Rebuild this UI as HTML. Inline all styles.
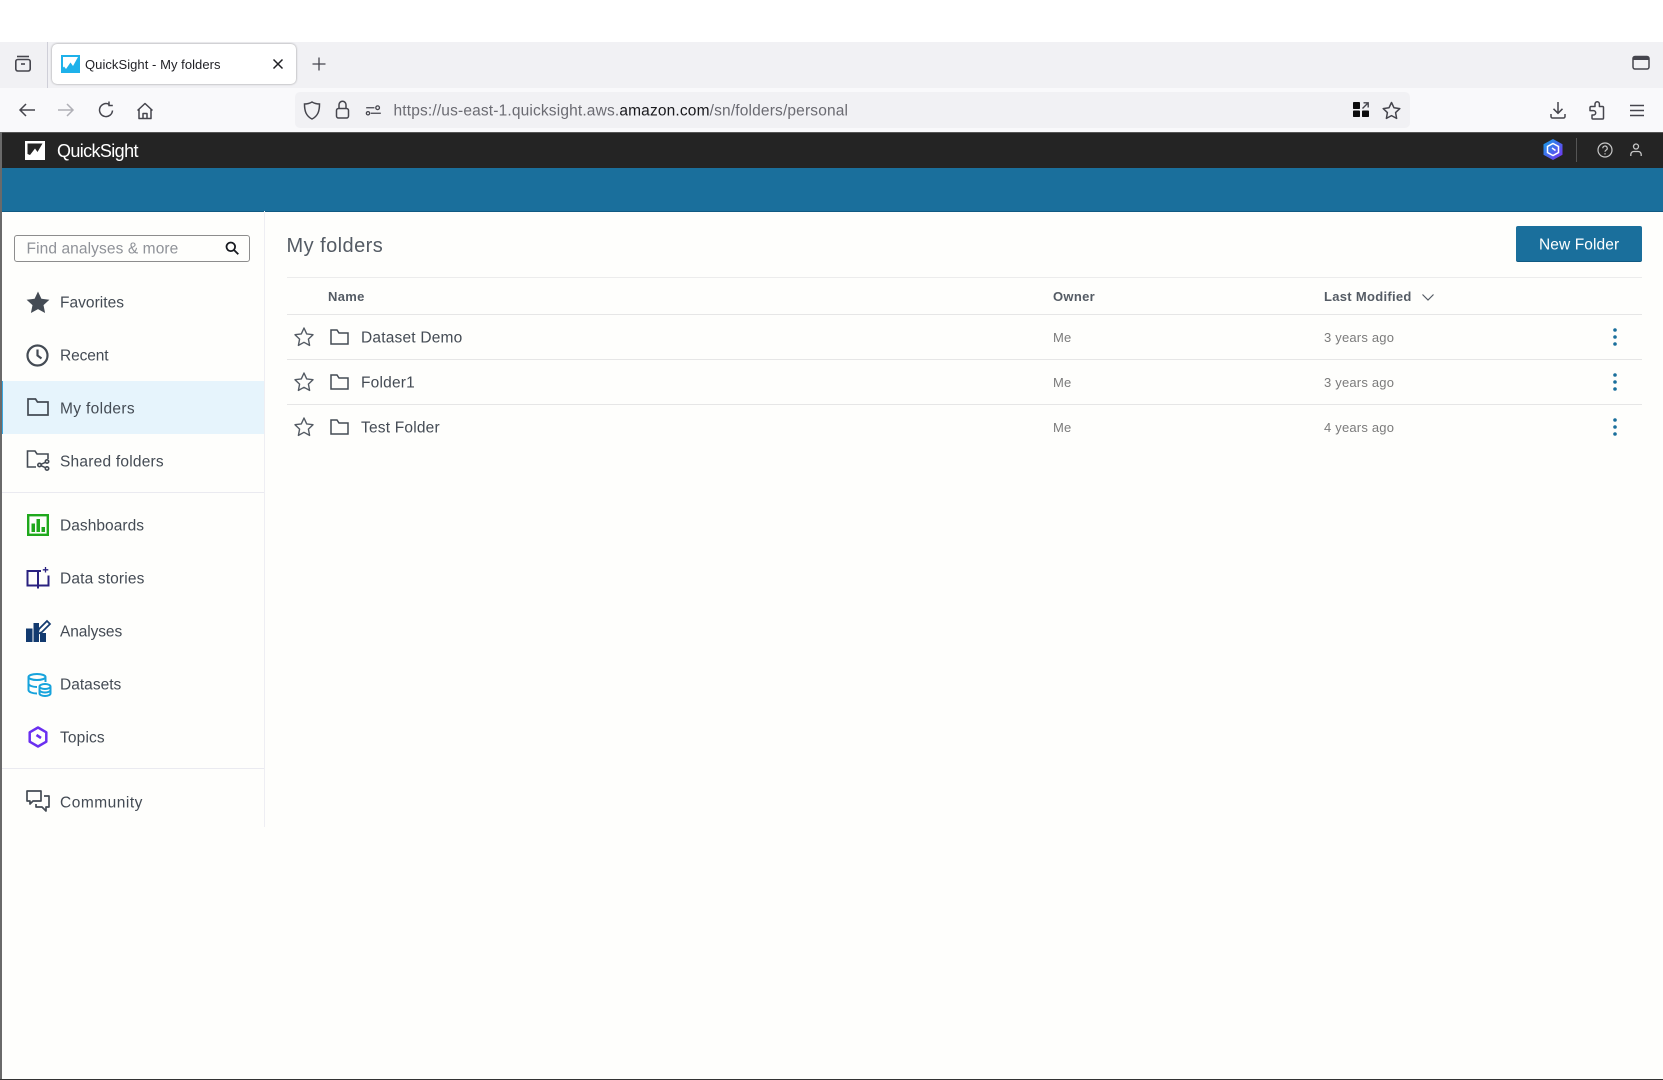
<!DOCTYPE html>
<html lang="en">
<head>
<meta charset="utf-8">
<title>QuickSight - My folders</title>
<style>
html,body{margin:0;padding:0;background:#fff}
body{width:1663px;height:1080px;position:relative;overflow:hidden;font-family:"Liberation Sans",Arial,sans-serif;color:#444b54;filter:blur(.35px)}
.b{position:absolute}
.t{position:absolute;white-space:nowrap;transform:translateY(-50%);line-height:1.2}
svg{position:absolute;overflow:visible;fill:none}
.nav{font-size:15.5px;color:#444b54;left:60px;letter-spacing:.15px}
.row{font-size:15.5px;color:#444b54;left:361px;letter-spacing:.2px}
.sm{font-size:13px;color:#7b7b7b;letter-spacing:.2px}
.th{font-size:13px;font-weight:700;color:#545b64;letter-spacing:.3px}
.line{position:absolute;left:286.5px;width:1355.5px;height:1px;background:#e6e6e6}
</style>
</head>
<body>
<!-- browser chrome -->
<div class="b" style="left:0;top:42px;width:1663px;height:46px;background:#f1f1f4"></div>
<div class="b" style="left:0;top:88px;width:1663px;height:44px;background:#f9f9fb"></div>
<div class="b" style="left:47px;top:42px;width:1px;height:46px;background:#cfcfd8"></div>
<svg style="left:12.5px;top:54px" width="20" height="20" viewBox="0 0 20 20" stroke="#45454d" stroke-width="1.6"><path d="M4 2.5h12"/><rect x="2.8" y="5.5" width="14.4" height="11.5" rx="2"/><path d="M8 10h4"/></svg>
<div class="b" style="left:52px;top:43.5px;width:243.5px;height:40.5px;background:#fff;border-radius:5px;box-shadow:0 0 2px rgba(0,0,0,.4)"></div>
<svg style="left:60.5px;top:55px" width="19" height="18" viewBox="0 0 19 18"><rect width="19" height="18" fill="#1eb1ea"/><path d="M2 2h15l-5 9-2.500-3.500L5 14l-2-2.500-1 1z" fill="#fff"/></svg>
<div class="t" style="left:85px;top:65px;font-size:13px;color:#1f1f24;letter-spacing:.05px">QuickSight - My folders</div>
<svg style="left:271.500px;top:58px" width="12" height="12" viewBox="0 0 12 12" stroke="#1f1f24" stroke-width="1.500"><path d="M1.500 1.500l9 9M10.500 1.500l-9 9"/></svg>
<svg style="left:312px;top:57px" width="14" height="14" viewBox="0 0 14 14" stroke="#45454d" stroke-width="1.300"><path d="M7 .5v13M.5 7h13"/></svg>
<svg style="left:1632px;top:55px" width="18" height="16" viewBox="0 0 18 16" stroke="#45454d" stroke-width="1.500"><rect x="1" y="1.500" width="16" height="12.500" rx="2"/><path d="M1 3.500h16" stroke-width="3"/></svg>

<svg style="left:18px;top:102px" width="18" height="16" viewBox="0 0 18 16" stroke="#45454d" stroke-width="1.500"><path d="M17 8H2M8 2L2 8l6 6"/></svg>
<svg style="left:57px;top:102px" width="18" height="16" viewBox="0 0 18 16" stroke="#b0b0b6" stroke-width="1.500"><path d="M1 8h15M10 2l6 6-6 6"/></svg>
<svg style="left:97px;top:100.500px" width="18" height="18" viewBox="0 0 18 18" stroke="#45454d" stroke-width="1.500"><path d="M15.500 9.500A6.500 6.500 0 1 1 12 3.300"/><path d="M12 .5v4h3.800" /></svg>
<svg style="left:136px;top:101.500px" width="18" height="18" viewBox="0 0 18 18" stroke="#45454d" stroke-width="1.500" stroke-linejoin="round"><path d="M1.500 8.500L9 1.500l7.500 7M3 7v9.500h12V7M7 16.500v-5h4v5"/></svg>

<div class="b" style="left:295px;top:92px;width:1114.500px;height:35.500px;background:#f1f1f4;border-radius:5px"></div>
<svg style="left:303px;top:101px" width="18" height="19" viewBox="0 0 18 19" stroke="#45454d" stroke-width="1.500"><path d="M9 1C6.500 2.500 4 3 1.500 3c0 7 1.500 12 7.500 15 6-3 7.500-8 7.500-15C14 3 11.500 2.500 9 1z"/></svg>
<svg style="left:335px;top:100px" width="15" height="19" viewBox="0 0 15 19" stroke="#45454d" stroke-width="1.500"><rect x="1.500" y="8.500" width="12" height="9.500" rx="2"/><path d="M4 8.500V4.800a3.500 3.500 0 0 1 7 0v3.700"/></svg>
<svg style="left:366px;top:105px" width="15" height="11" viewBox="0 0 16 12" stroke="#45454d" stroke-width="1.400"><path d="M0 3h9M5 9h11"/><circle cx="12.500" cy="3" r="2"/><circle cx="2" cy="9" r="1.800"/></svg>
<div class="t" style="left:393.500px;top:111.500px;font-size:15.500px;color:#6b6b72;letter-spacing:.16px">https://us-east-1.quicksight.aws.<span style="color:#18181c">amazon.com</span>/sn/folders/personal</div>
<svg style="left:1353px;top:102px" width="16" height="15" viewBox="0 0 16 15"><rect x="0" y="0" width="7" height="7" rx=".8" fill="#0c0c0d"/><rect x="0" y="8.500" width="7" height="6.500" rx=".8" fill="#0c0c0d"/><rect x="9" y="8.500" width="7" height="6.500" rx=".8" fill="#0c0c0d"/><path d="M9.500 6.500L15 1M10.500 .8H15.200V5.500" stroke="#45454d" stroke-width="1.400"/></svg>
<svg style="left:1382px;top:100.500px" width="19" height="19" viewBox="0 0 19 19" stroke="#45454d" stroke-width="1.500" stroke-linejoin="round"><path d="M9.500 1.500l2.500 5.300 5.800.8-4.200 4 1 5.800-5.100-2.800-5.100 2.800 1-5.800-4.200-4 5.800-.8z"/></svg>
<svg style="left:1549.500px;top:101.500px" width="16" height="17" viewBox="0 0 16 17" stroke="#45454d" stroke-width="1.500"><path d="M8 0v11M3.500 6.800L8 11.300l4.500-4.500M1 12v2.500a1.500 1.500 0 0 0 1.500 1.500h11a1.500 1.500 0 0 0 1.500-1.500V12"/></svg>
<svg style="left:1589px;top:100.500px" width="16" height="19" viewBox="0 0 16 19" stroke="#45454d" stroke-width="1.500" stroke-linejoin="round"><path d="M6 5.500V3a2.200 2.200 0 0 1 4.400 0v2.500h3.100a1 1 0 0 1 1 1V17a1 1 0 0 1-1 1H4a1 1 0 0 1-1-1v-3h1.500a2.200 2.200 0 0 0 0-4.400H1V6.500a1 1 0 0 1 1-1z"/></svg>
<svg style="left:1630px;top:103.500px" width="14" height="13" viewBox="0 0 14 13" stroke="#45454d" stroke-width="1.500"><path d="M0 1.500h14M0 6.500h14M0 11.500h14"/></svg>

<!-- app header -->
<div class="b" style="left:0;top:132px;width:1663px;height:35.500px;background:#242424;border-top:1px solid #555;box-sizing:border-box"></div>
<div class="b" style="left:0;top:167.500px;width:1663px;height:44px;background:#1a6f9c;border-bottom:1px solid #105a82;box-sizing:border-box"></div>
<svg style="left:24.500px;top:141px" width="20" height="19" viewBox="0 0 20 19"><rect width="20" height="19" fill="#fff"/><path d="M2.500 2.500h15L12.500 11 10 7.500 5 14l-2.500-1z" fill="#242424"/></svg>
<div class="t" style="left:57px;top:151.500px;font-size:18px;color:#fff;letter-spacing:-.62px">QuickSight</div>
<svg style="left:1543px;top:139px" width="20" height="21" viewBox="0 0 20 21"><defs><linearGradient id="g" x1="0" y1="0" x2="1" y2="1"><stop offset="0" stop-color="#12a3e8"/><stop offset="1" stop-color="#7a2df0"/></linearGradient></defs><path d="M10 0l9.500 5.200v10.600L10 21 .5 15.800V5.200z" fill="url(#g)"/><path d="M10 4.500l5.500 3v6L10 16.500l-5.500-3v-6z" stroke="#fff" stroke-width="1.500"/><path d="M9 9l3.500 2.500" stroke="#fff" stroke-width="1.500"/></svg>
<div class="b" style="left:1576px;top:138px;width:1px;height:24px;background:#555"></div>
<svg style="left:1597px;top:142px" width="16" height="16" viewBox="0 0 16 16" stroke="#c8c8c8" stroke-width="1.200"><circle cx="8" cy="8" r="7"/><path d="M5.800 6.200a2.200 2.200 0 1 1 3.300 1.900c-.8.500-1.100.9-1.100 1.700"/><path d="M8 11.200v1.300"/></svg>
<svg style="left:1630px;top:143px" width="12" height="14" viewBox="0 0 12 14" stroke="#c8c8c8" stroke-width="1.300"><circle cx="6" cy="3.500" r="2.500"/><path d="M.8 13v-1.500a3 3 0 0 1 3-3h4.400a3 3 0 0 1 3 3V13"/></svg>

<!-- page -->
<div class="b" style="left:0;top:211.500px;width:1663px;height:868.500px;background:#fefefc"></div>
<div class="b" style="left:0;top:132px;width:1.500px;height:948px;background:#6a6a6a"></div>
<div class="b" style="left:0;top:1079px;width:1663px;height:1px;background:#333"></div>
<div class="b" style="left:264px;top:211px;width:1px;height:616px;background:#eeeef3"></div>

<!-- search -->
<div class="b" style="left:14px;top:234.500px;width:236px;height:27.500px;border:1px solid #8d8d8d;border-radius:3px;box-sizing:border-box"></div>
<div class="t" style="left:26.500px;top:249.500px;font-size:15.500px;color:#8f9298;letter-spacing:.1px">Find analyses &amp; more</div>
<svg style="left:225px;top:241px" width="14" height="14" viewBox="0 0 14 14" stroke="#16191f" stroke-width="1.800"><circle cx="5.800" cy="5.800" r="4.300"/><path d="M9 9l4.300 4.300"/></svg>

<!-- sidebar -->
<div class="b" style="left:2px;top:381px;width:262px;height:53px;background:#e6f4fc;border-left:1.500px solid #3aa7e0;box-sizing:border-box"></div>
<div class="b" style="left:2px;top:492px;width:262px;height:1px;background:#eaeaf0"></div>
<div class="b" style="left:2px;top:768px;width:262px;height:1px;background:#eaeaf0"></div>

<svg style="left:26px;top:291px" width="24" height="22" viewBox="0 0 24 22"><path d="M12 .5l3.400 7.300 8 .9-5.900 5.400 1.600 7.900L12 18.100l-7.100 3.900 1.600-7.900L.6 8.700l8-.9z" fill="#444b54"/></svg>
<div class="t nav" style="top:304px;letter-spacing:.03px">Favorites</div>
<svg style="left:26px;top:343.500px" width="23" height="23" viewBox="0 0 23 23" stroke="#444b54" stroke-width="2.200"><circle cx="11.500" cy="11.500" r="10"/><path d="M11.500 5.500v6l4 3"/></svg>
<div class="t nav" style="top:357px;letter-spacing:-.1px">Recent</div>
<svg style="left:27px;top:398px" width="22" height="18" viewBox="0 0 22 18" stroke="#444b54" stroke-width="1.700"><path d="M1 1h7.500l2 3H21v13H1z"/></svg>
<div class="t nav" style="top:410px;letter-spacing:.35px">My folders</div>
<svg style="left:26px;top:450px" width="24" height="21" viewBox="0 0 24 21" stroke="#444b54" stroke-width="1.600"><path d="M10 17H1.500V1h7.500l2 3h11v5"/><circle cx="21" cy="11.500" r="1.700"/><circle cx="13.500" cy="15" r="1.700"/><circle cx="21" cy="18.500" r="1.700"/><path d="M15 14.300l4.500-2M15 15.700l4.500 2"/></svg>
<div class="t nav" style="top:462.500px;letter-spacing:.22px">Shared folders</div>

<svg style="left:27px;top:514px" width="22" height="22" viewBox="0 0 22 22"><rect x="1.200" y="1.200" width="19.600" height="19.600" stroke="#1fa81c" stroke-width="2.400"/><path d="M4.500 9.500h3.500V18H4.500zM9.500 5h3.500v13H9.500zM14.500 13h3.500v5h-3.500z" fill="#1fa81c"/></svg>
<div class="t nav" style="top:527px;letter-spacing:.05px">Dashboards</div>
<svg style="left:26px;top:567px" width="24" height="22" viewBox="0 0 24 22" stroke="#29217f" stroke-width="2"><path d="M1.500 4h10.500v14.500H1.500zM15 4h-3M22.500 8.500v10H12M12 18.500v3"/><path d="M19.500 0v5.500M16.800 2.800h5.500" stroke-width="1.300"/></svg>
<div class="t nav" style="top:580px">Data stories</div>
<svg style="left:26px;top:620px" width="24" height="22" viewBox="0 0 24 22"><path d="M0 8.500h6.500V22H0zM7.500 3h5.500v19H7.500zM14 13h6v9h-6z" fill="#123a6f"/><path d="M11.500 14l1.500-5L21 1l3 3-8 8z" fill="#fefefc" stroke="#123a6f" stroke-width="1.700"/></svg>
<div class="t nav" style="top:633px;letter-spacing:-.1px">Analyses</div>
<svg style="left:26.500px;top:672.500px" width="24" height="24" viewBox="0 0 24 24" stroke="#16a3dc" stroke-width="2"><ellipse cx="10" cy="4" rx="8.500" ry="3"/><path d="M1.500 4v13c0 2 4 3.500 8.500 3.500M18.500 4v5M1.500 10.500c0 2 4 3.500 8.500 3.500"/><ellipse cx="18" cy="13.500" rx="5.500" ry="2.500" fill="#fefefc"/><path d="M12.500 13.500v7c0 1.400 2.500 2.500 5.500 2.500s5.500-1.100 5.500-2.500v-7M12.500 17c0 1.400 2.500 2.500 5.500 2.500s5.500-1.100 5.500-2.500"/></svg>
<div class="t nav" style="top:686px;letter-spacing:.02px">Datasets</div>
<svg style="left:28px;top:726px" width="20" height="22" viewBox="0 0 20 22" stroke="#6a2ff0" stroke-width="2.500" stroke-linejoin="round"><path d="M10 1.500l8.300 4.800v9.400L10 20.500l-8.300-4.800V6.300z"/><path d="M8.500 9l4.500 3" stroke-width="2.600"/></svg>
<div class="t nav" style="top:739px">Topics</div>
<svg style="left:26px;top:790px" width="24" height="23" viewBox="0 0 24 23" stroke="#444b54" stroke-width="1.700" stroke-linejoin="round"><path d="M1 1h14v10H7l-3 3v-3H1z"/><path d="M18 6h5v11h-3v4l-4-4h-6v-3"/></svg>
<div class="t nav" style="top:803.500px;letter-spacing:.5px">Community</div>

<!-- main -->
<div class="t" style="left:286.500px;top:246px;font-size:20px;color:#545b64;letter-spacing:.45px">My folders</div>
<div class="b" style="left:1516px;top:226px;width:126px;height:36px;background:#1a6f9c;border-radius:2px;border-bottom:1px solid #105a82;box-sizing:border-box"></div>
<div class="t" style="left:1539px;top:246px;font-size:15.500px;color:#fff;letter-spacing:.1px">New Folder</div>

<div class="line" style="top:276.500px;height:1.500px;background:#ececec"></div>
<div class="line" style="top:314px"></div>
<div class="line" style="top:359px"></div>
<div class="line" style="top:404px"></div>

<div class="t th" style="left:328px;top:297px">Name</div>
<div class="t th" style="left:1053px;top:297px">Owner</div>
<div class="t th" style="left:1324px;top:297px">Last Modified</div>
<svg style="left:1422px;top:293.500px" width="12" height="7" viewBox="0 0 12 7" stroke="#545b64" stroke-width="1.200"><path d="M.5.500L6 6l5.500-5.500"/></svg>

<!-- rows -->
<svg style="left:294px;top:327px" width="20" height="19" viewBox="0 0 20 19" stroke="#545b64" stroke-width="1.400" stroke-linejoin="round"><path d="M10 1l2.700 5.900 6.300.8-4.600 4.400 1.200 6.300L10 15.300l-5.600 3.100 1.200-6.300L1 7.700l6.300-.8z"/></svg>
<svg style="left:330px;top:329px" width="19" height="16" viewBox="0 0 19 16" stroke="#444b54" stroke-width="1.500"><path d="M1 1h6l2 3h9v11H1z"/></svg>
<div class="t row" style="top:338.500px">Dataset Demo</div>
<div class="t sm" style="left:1053px;top:337.500px">Me</div>
<div class="t sm" style="left:1324px;top:337.500px">3 years ago</div>
<svg style="left:1612px;top:328px" width="6" height="18" viewBox="0 0 6 18"><circle cx="3" cy="2" r="1.800" fill="#1a6f9c"/><circle cx="3" cy="9" r="1.800" fill="#1a6f9c"/><circle cx="3" cy="16" r="1.800" fill="#1a6f9c"/></svg>

<svg style="left:294px;top:372px" width="20" height="19" viewBox="0 0 20 19" stroke="#545b64" stroke-width="1.400" stroke-linejoin="round"><path d="M10 1l2.700 5.900 6.300.8-4.600 4.400 1.200 6.300L10 15.300l-5.600 3.100 1.200-6.300L1 7.700l6.300-.8z"/></svg>
<svg style="left:330px;top:374px" width="19" height="16" viewBox="0 0 19 16" stroke="#444b54" stroke-width="1.500"><path d="M1 1h6l2 3h9v11H1z"/></svg>
<div class="t row" style="top:384px">Folder1</div>
<div class="t sm" style="left:1053px;top:382.500px">Me</div>
<div class="t sm" style="left:1324px;top:382.500px">3 years ago</div>
<svg style="left:1612px;top:373px" width="6" height="18" viewBox="0 0 6 18"><circle cx="3" cy="2" r="1.800" fill="#1a6f9c"/><circle cx="3" cy="9" r="1.800" fill="#1a6f9c"/><circle cx="3" cy="16" r="1.800" fill="#1a6f9c"/></svg>

<svg style="left:294px;top:417px" width="20" height="19" viewBox="0 0 20 19" stroke="#545b64" stroke-width="1.400" stroke-linejoin="round"><path d="M10 1l2.700 5.900 6.300.8-4.600 4.400 1.200 6.300L10 15.300l-5.600 3.100 1.200-6.300L1 7.700l6.300-.8z"/></svg>
<svg style="left:330px;top:419px" width="19" height="16" viewBox="0 0 19 16" stroke="#444b54" stroke-width="1.500"><path d="M1 1h6l2 3h9v11H1z"/></svg>
<div class="t row" style="top:429px">Test Folder</div>
<div class="t sm" style="left:1053px;top:427.500px">Me</div>
<div class="t sm" style="left:1324px;top:427.500px">4 years ago</div>
<svg style="left:1612px;top:418px" width="6" height="18" viewBox="0 0 6 18"><circle cx="3" cy="2" r="1.800" fill="#1a6f9c"/><circle cx="3" cy="9" r="1.800" fill="#1a6f9c"/><circle cx="3" cy="16" r="1.800" fill="#1a6f9c"/></svg>
</body>
</html>
